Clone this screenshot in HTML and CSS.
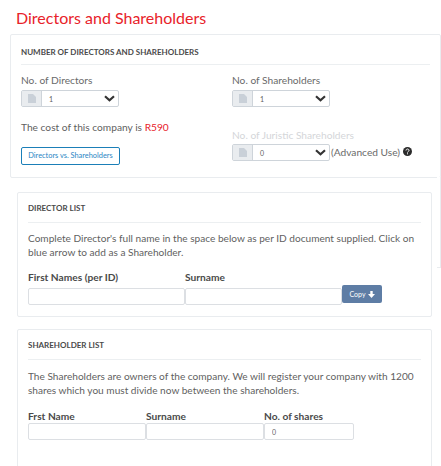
FILE: index.html
```html
<!DOCTYPE html>
<html lang="en">
<head>
	<meta charset="UTF-8">
	<title>Directors and Shareholders</title>
	<link rel="stylesheet" href="styles.css">
</head>
<body>
<h1 class="page-title">Directors and Shareholders</h1>

<div class="wrap">
	<div class="panel panel-top">
		<h5 class="panel-title">NUMBER OF DIRECTORS AND SHAREHOLDERS</h5>
		<div class="cols">
			<div class="col">
				<label class="lbl">No. of Directors</label>
				<div class="pick">
					<span class="pick-icon"><svg width="8" height="9" viewBox="0 0 8 9"><path d="M0 0h5l3 3v6H0z" fill="#c9d0d8"/></svg></span>
					<span class="pick-val">1</span>
					<svg class="chev" width="11" height="7" viewBox="0 0 11 7"><path d="M1 1.200l4.500 4 4.500-4" fill="none" stroke="#333" stroke-width="2.2"/></svg>
				</div>
				<p class="cost">The cost of this company is <span class="red">R590</span></p>
				<a class="btn-outline">Directors vs. Shareholders</a>
			</div>
			<div class="col">
				<label class="lbl">No. of Shareholders</label>
				<div class="pick">
					<span class="pick-icon"><svg width="8" height="9" viewBox="0 0 8 9"><path d="M0 0h5l3 3v6H0z" fill="#c9d0d8"/></svg></span>
					<span class="pick-val">1</span>
					<svg class="chev" width="11" height="7" viewBox="0 0 11 7"><path d="M1 1.200l4.500 4 4.500-4" fill="none" stroke="#333" stroke-width="2.2"/></svg>
				</div>
				<label class="lbl lbl-off">No. of Juristic Shareholders</label>
				<div class="pick-row">
					<div class="pick">
						<span class="pick-icon"><svg width="8" height="9" viewBox="0 0 8 9"><path d="M0 0h5l3 3v6H0z" fill="#c9d0d8"/></svg></span>
						<span class="pick-val">0</span>
						<svg class="chev" width="11" height="7" viewBox="0 0 11 7"><path d="M1 1.200l4.500 4 4.500-4" fill="none" stroke="#333" stroke-width="2.2"/></svg>
					</div>
					<span class="adv">(Advanced Use)</span>
					<svg class="help" width="9" height="9" viewBox="0 0 9 9"><circle cx="4.5" cy="4.5" r="4.5" fill="#2b2b2b"/><path d="M3 3.5c0-2 3-2 3 0 0 1-1.500 1-1.500 2" fill="none" stroke="#fff" stroke-width="1"/><rect x="4" y="6.300" width="1" height="1" fill="#fff"/></svg>
				</div>
			</div>
		</div>
	</div>

	<div class="panel panel-list panel-dir">
		<h5 class="panel-title">DIRECTOR LIST</h5>
		<p class="note">Complete Director's full name in the space below as per ID document supplied. Click on blue arrow to add as a Shareholder.</p>
		<div class="fields">
			<div class="field w-first">
				<label>First Names (per ID)</label>
				<input type="text">
			</div>
			<div class="field w-sur">
				<label>Surname</label>
				<input type="text">
			</div>
			<a class="btn-copy">Copy <svg width="7" height="7" viewBox="0 0 7 7"><path d="M2.300 0h2.400v3H7L3.500 7 0 3h2.300z" fill="#fff"/></svg></a>
		</div>
	</div>

	<div class="panel panel-list panel-sh">
		<h5 class="panel-title">SHAREHOLDER LIST</h5>
		<p class="note">The Shareholders are owners of the company. We will register your company with 1200 shares which you must divide now between the shareholders.</p>
		<div class="fields">
			<div class="field w-sh">
				<label>Frst Name</label>
				<input type="text">
			</div>
			<div class="field w-sh">
				<label>Surname</label>
				<input type="text">
			</div>
			<div class="field w-num">
				<label>No. of shares</label>
				<input type="text" value="0">
			</div>
		</div>
	</div>
</div>
</body>
</html>
```

FILE: styles.css
```css
body{
	margin: 0;
	height: 466px;
	overflow: hidden;
	background-color: #fff;
	color: #5f5f5f;
	font-family: "Lato", "Noto Sans", sans-serif;
	font-size: 10.2px;
}
.page-title{
	margin: 0;
	padding: 7px 0 0 16px;
	height: 34px;
	box-sizing: border-box;
	font-size: 16px;
	line-height: 21px;
	font-weight: 400;
	color: #e8222a;
}
.wrap{
	padding-left: 10px;
}
.panel{
	background-color: #fff;
	border: 1px solid #e9ecef;
	border-radius: 2px;
	box-sizing: border-box;
}
.panel-top{
	position: relative;
	width: 431px;
	height: 144px;
	padding: 11px 10px 0;
}
/* the edge of a panel lying under the lists, it shows at the right side only */
.panel-top::after{
	content: "";
	position: absolute;
	top: 100%;
	right: -1px;
	width: 4px;
	height: 91px;
	box-sizing: border-box;
	background-color: #fff;
	border-right: 1px solid #e9ecef;
	border-bottom: 1px solid #e9ecef;
}
.panel-list{
	position: relative;
	z-index: 1;
	width: 415px;
	margin-left: 7px;
	padding: 9px 10px 0;
}
.panel-dir{
	height: 125px;
	margin-top: 14px;
}
.panel-sh{
	height: 160px;
	margin-top: 12px;
}
.panel-title{
	margin: 0;
	padding-bottom: 8px;
	border-bottom: 1px solid #eceff1;
	font-size: 8px;
	line-height: 12px;
	font-weight: 700;
	color: #4a4a4a;
}
.panel-top .panel-title{
	padding-bottom: 6px;
}
.cols{
	display: flex;
	margin-top: 8px;
}
.col{
	flex: none;
	width: 211px;
}
.lbl{
	display: block;
	line-height: 14px;
	color: #6a6a6a;
}
.lbl-off{
	color: #d4d6d9;
	margin-top: 21px;
}
.pick{
	display: flex;
	align-items: center;
	width: 98px;
	height: 17px;
	margin-top: 3px;
	border: 1px solid #ced4da;
	border-radius: 2px;
	box-sizing: border-box;
	background-color: #fff;
}
.lbl-off + .pick-row .pick{
	margin-top: 2px;
}
.pick-icon{
	display: flex;
	align-items: center;
	justify-content: center;
	width: 19px;
	height: 100%;
	background-color: #e9ecef;
	border-right: 1px solid #ced4da;
}
.pick-val{
	flex: 1;
	padding-left: 7px;
	font-size: 7px;
	color: #5f5f5f;
}
.chev{
	margin-right: 3px;
}
.cost{
	margin: 13px 0 0;
	line-height: 14px;
}
.red{
	color: #e8222a;
}
.btn-outline{
	display: block;
	width: 99px;
	height: 18px;
	margin-top: 13px;
	box-sizing: border-box;
	border: 1px solid #1b7fb8;
	border-radius: 2px;
	text-align: center;
	font-size: 7.4px;
	line-height: 16px;
	color: #2a86c4;
}
.pick-row{
	display: flex;
	align-items: center;
}
.adv{
	margin-left: 1px;
	line-height: 14px;
	color: #6a6a6a;
}
.help{
	margin-left: 3px;
}
.note{
	margin: 8px 0 0;
	font-size: 10.1px;
	line-height: 14px;
}
.panel-sh .note{
	margin-top: 9px;
}
.fields{
	display: flex;
	align-items: flex-end;
	margin-top: 11px;
}
.panel-sh .fields{
	margin-top: 12px;
}
.field label{
	display: block;
	margin-bottom: 4px;
	line-height: 14px;
	font-weight: 700;
	color: #4a4a4a;
}
.panel-sh .field label{
	margin-bottom: 0;
}
.field input{
	display: block;
	width: 100%;
	height: 17px;
	margin: 0;
	box-sizing: border-box;
	border: 1px solid #dcdfe3;
	border-radius: 2px;
	padding: 0 7px;
	font-family: inherit;
	font-size: 7px;
	color: #666;
}
.w-first{
	width: 157px;
}
.w-sur{
	width: 157px;
}
.w-sh{
	width: 118px;
}
.w-num{
	width: 90px;
}
.btn-copy{
	display: flex;
	align-items: center;
	justify-content: center;
	gap: 2px;
	width: 40px;
	height: 18px;
	margin-bottom: 2px;
	border-radius: 2px;
	background-color: #5e7da5;
	color: #fff;
	font-size: 7px;
}
```
